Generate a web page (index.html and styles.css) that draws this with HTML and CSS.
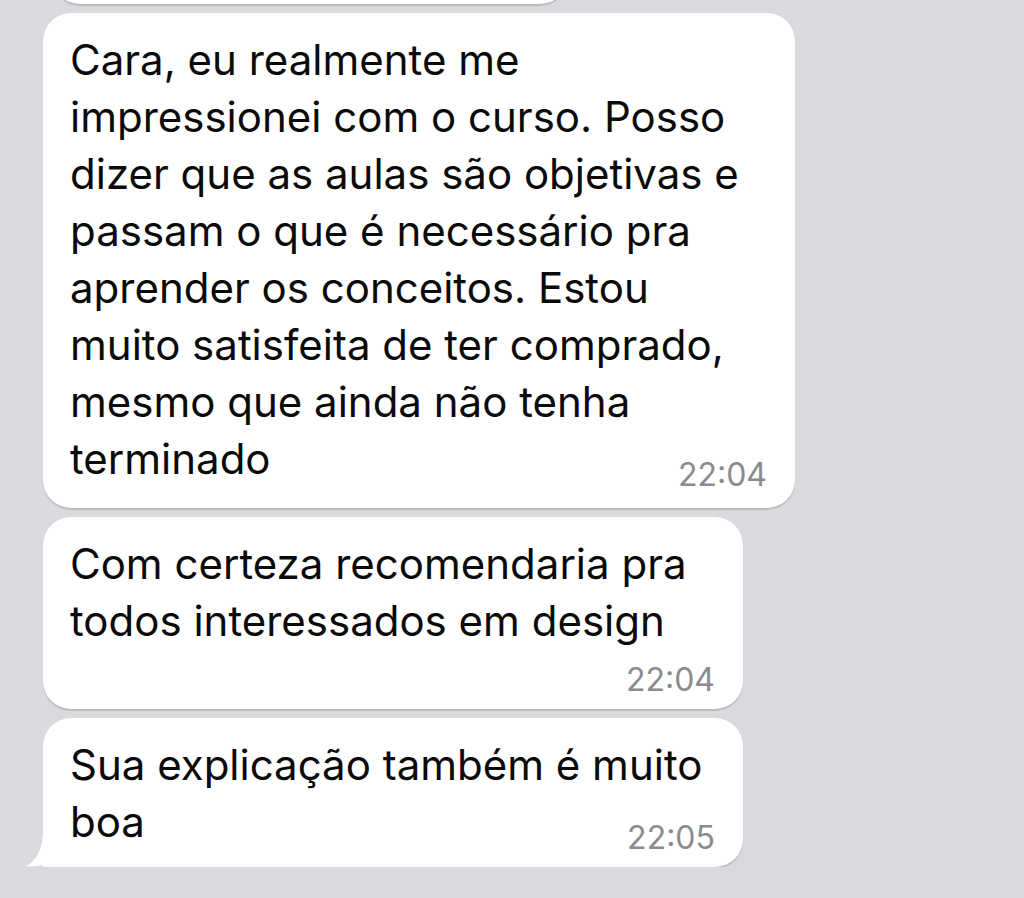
FILE: index.html
```html
<!DOCTYPE html>
<html lang="pt-BR">
<head>
    <meta charset="UTF-8">
    <title>Conversa</title>
    <link rel="stylesheet" href="styles.css">
</head>
<body>
    <div class="chat">
        <div class="bubble prev"></div>
        <div class="bubble wide">
            <p class="msg">Cara, eu realmente me<br>impressionei com o curso. Posso<br>dizer que as aulas são objetivas e<br>passam o que é necessário pra<br>aprender os conceitos. Estou<br>muito satisfeita de ter comprado,<br>mesmo que ainda não tenha<br>terminado</p>
            <div class="time">22:04</div>
        </div>
        <div class="bubble narrow">
            <p class="msg">Com certeza recomendaria pra<br>todos interessados em design</p>
            <div class="time own-line">22:04</div>
        </div>
        <div class="bubble narrow last">
            <p class="msg">Sua explicação também é muito<br>boa</p>
            <div class="time">22:05</div>
            <svg class="tail" width="44" height="40" viewBox="0 0 44 40">
                <path d="M17 0 C17 16 15 30 0 39.5 C10 40 20 38 28 34.5 C32 38 37 40 44 40 L44 0 Z" fill="#fff"/>
            </svg>
        </div>
    </div>
</body>
</html>
```

FILE: styles.css
```css
body { margin: 0; background: #dadade; font-family: Inter, "Liberation Sans", sans-serif; overflow: hidden; }
.chat { display: flex; flex-direction: column; align-items: flex-start; gap: 9px; padding-left: 43px; }
.bubble { background: #fff; border-radius: 28px; padding: 18px 28px 13px 27px; box-sizing: border-box; box-shadow: 0 1.5px 1px rgba(0, 0, 0, 0.14); }
.prev { width: 516px; height: 60px; margin: -56px 0 0 9px; padding: 0; }
.wide { width: 752px; }
.narrow { width: 700px; padding-bottom: 9px; }
.msg { margin: 0; font-size: 42px; line-height: 57px; color: #0a0a0a; }
.time { font-size: 32px; line-height: 40px; color: #8a8a8f; text-align: right; margin-top: -32px; }
.time.own-line { margin-top: 11px; }
.last { position: relative; border-bottom-left-radius: 0; }
.tail { position: absolute; left: -17px; bottom: 0; }
```
